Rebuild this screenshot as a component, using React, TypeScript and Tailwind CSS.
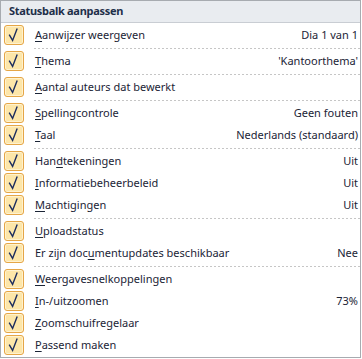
import React from "react";

type Item = { label: string; u: number; value?: string };

const groups: Item[][] = [
  [{ label: "Aanwijzer weergeven", u: 0, value: "Dia 1 van 1" }],
  [{ label: "Thema", u: 0, value: "'Kantoorthema'" }],
  [{ label: "Aantal auteurs dat bewerkt", u: 0 }],
  [
    { label: "Spellingcontrole", u: 0, value: "Geen fouten" },
    { label: "Taal", u: 0, value: "Nederlands (standaard)" },
  ],
  [
    { label: "Handtekeningen", u: 3, value: "Uit" },
    { label: "Informatiebeheerbeleid", u: 0, value: "Uit" },
    { label: "Machtigingen", u: 0, value: "Uit" },
  ],
  [
    { label: "Uploadstatus", u: 0 },
    { label: "Er zijn documentupdates beschikbaar", u: 11, value: "Nee" },
  ],
  [
    { label: "Weergavesnelkoppelingen", u: 0 },
    { label: "In-/uitzoomen", u: 0, value: "73%" },
    { label: "Zoomschuifregelaar", u: 0 },
    { label: "Passend maken", u: 0 },
  ],
];

function Check() {
  return (
    <div className="w-[20px] h-[20px] rounded-[3px] border border-[#e5a647] bg-[#fde6a9] shadow-[inset_0_0_0_1px_#fff2cf] flex-none">
      <svg width="18" height="18" viewBox="0 0 18 18" className="block">
        <path
          d="M4.2 8.6 L7.6 14.4 L12.2 2.6"
          fill="none"
          stroke="#1c2c5e"
          strokeWidth="1.4"
          strokeLinejoin="miter"
        />
      </svg>
    </div>
  );
}

function Row({ item }: { item: Item }) {
  const { label, u, value } = item;
  return (
    <div className="h-[22px] flex items-center">
      <div className="w-[30px] pl-[3px] flex-none flex items-center">
        <Check />
      </div>
      <div className="flex-1 flex items-center justify-between pl-[4px] pr-[2px] text-[11px] text-[#1b2436]">
        <span>
          {label.slice(0, u)}
          <span className="underline underline-offset-[2px]">{label[u]}</span>
          {label.slice(u + 1)}
        </span>
        {value && <span>{value}</span>}
      </div>
    </div>
  );
}

function Separator() {
  return (
    <div className="h-[4px] pl-[33px] pt-[2px]">
      <div className="h-px bg-[linear-gradient(to_right,#c6c6c6_2px,transparent_2px)] bg-[length:4px_1px]" />
    </div>
  );
}

export default function App() {
  return (
    <div
      className="w-[361px] h-[358px] border border-[#a7abb0] bg-white flex flex-col"
      style={{ fontFamily: '"Noto Sans", "Open Sans", sans-serif' }}
    >
      <div className="h-[22px] flex-none bg-[#e9ecf0] border-b border-[#c9cdd3] flex items-center pl-[8px] text-[11px] tracking-[-0.3px] font-bold text-[#1e2f4a]">
        Statusbalk aanpassen
      </div>
      <div className="pt-[1px] flex flex-col">
        {groups.map((g, gi) => (
          <React.Fragment key={gi}>
            {gi > 0 && <Separator />}
            {g.map((it, i) => (
              <Row key={i} item={it} />
            ))}
          </React.Fragment>
        ))}
      </div>
    </div>
  );
}
